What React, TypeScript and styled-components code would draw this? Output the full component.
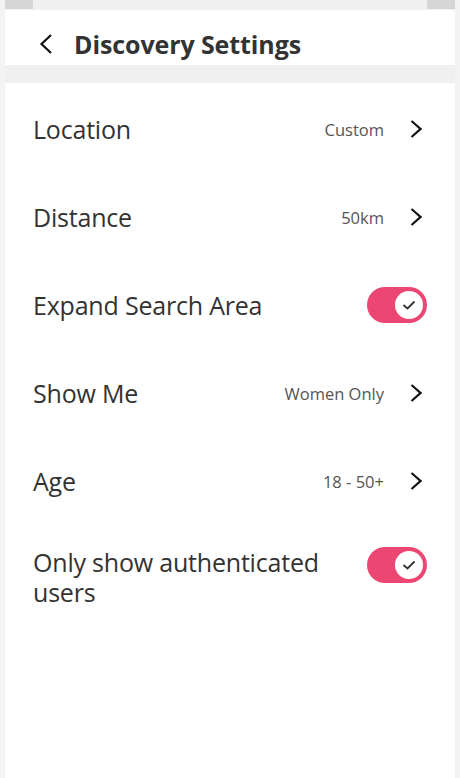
import React from "react";
import styled, { createGlobalStyle } from "styled-components";

const Global = createGlobalStyle`
  html, body { margin: 0; padding: 0; background: #f3f3f3; }
  body { font-family: "Open Sans", "Noto Sans", sans-serif; color: #333; }
  * { box-sizing: border-box; }
`;

const Page = styled.div`
  width: 460px;
  height: 778px;
  display: flex;
  flex-direction: column;
  padding: 0 5px;
  background: #f3f3f3;
  overflow: hidden;
`;

const TopStrip = styled.div`
  height: 10px;
  display: flex;
  justify-content: space-between;
  background: #f0f0f0;
`;

const Tab = styled.div`
  width: 28px;
  height: 9px;
  background: #d6d6d6;
`;

const Header = styled.header`
  height: 55px;
  background: #fff;
  display: flex;
  align-items: center;
  padding: 13px 0 0 34px;
  gap: 21px;
`;

const Title = styled.h1`
  margin: 0;
  font-size: 25px;
  font-weight: 700;
  color: #333;
  letter-spacing: -0.1px;
`;

const Separator = styled.div`
  height: 18px;
  background: #f0f0f0;
`;

const Content = styled.main`
  flex: 1;
  background: #fff;
  padding: 2px 28px 0 28px;
  display: flex;
  flex-direction: column;
`;

const Row = styled.div<{ $top?: boolean }>`
  min-height: 88px;
  display: flex;
  align-items: ${(p) => (p.$top ? "flex-start" : "center")};
  justify-content: space-between;
  padding: ${(p) => (p.$top ? "22px 0" : "0")};
`;

const Label = styled.span`
  font-size: 25px;
  line-height: 30px;
  color: #333;
  max-width: 300px;
  letter-spacing: -0.2px;
`;

const Right = styled.div`
  display: flex;
  align-items: center;
  gap: 26px;
  padding-right: 5px;
`;

const Value = styled.span`
  font-size: 16.5px;
  color: #555;
`;

const Toggle = styled.div`
  width: 60px;
  height: 36px;
  border-radius: 18px;
  background: #ec4673;
  display: flex;
  align-items: center;
  justify-content: flex-end;
  padding-right: 4px;
`;

const Knob = styled.div`
  width: 28px;
  height: 28px;
  border-radius: 50%;
  background: #fff;
  display: flex;
  align-items: center;
  justify-content: center;
`;

const Back = () => (
  <svg width="14" height="20" viewBox="0 0 14 20">
    <path d="M12 1 L2.5 10 L12 19" fill="none" stroke="#111" strokeWidth="2.2" />
  </svg>
);

const Chevron = () => (
  <svg width="12" height="18" viewBox="0 0 12 18">
    <path d="M1.5 1 L10.5 9 L1.5 17" fill="none" stroke="#111" strokeWidth="2.2" />
  </svg>
);

const Check = () => (
  <svg width="14" height="10" viewBox="0 0 14 10">
    <path d="M1.5 5 L5.5 8.5 L12.5 1.5" fill="none" stroke="#333" strokeWidth="1.8" />
  </svg>
);

const Switch = () => (
  <Toggle>
    <Knob>
      <Check />
    </Knob>
  </Toggle>
);

const LinkRow = ({ label, value }: { label: string; value: string }) => (
  <Row>
    <Label>{label}</Label>
    <Right>
      <Value>{value}</Value>
      <Chevron />
    </Right>
  </Row>
);

export default function App() {
  return (
    <>
      <Global />
      <Page>
        <TopStrip>
          <Tab />
          <Tab />
        </TopStrip>
        <Header>
          <Back />
          <Title>Discovery Settings</Title>
        </Header>
        <Separator />
        <Content>
          <LinkRow label="Location" value="Custom" />
          <LinkRow label="Distance" value="50km" />
          <Row>
            <Label>Expand Search Area</Label>
            <Switch />
          </Row>
          <LinkRow label="Show Me" value="Women Only" />
          <LinkRow label="Age" value="18 - 50+" />
          <Row $top>
            <Label>Only show authenticated users</Label>
            <Switch />
          </Row>
        </Content>
      </Page>
    </>
  );
}
